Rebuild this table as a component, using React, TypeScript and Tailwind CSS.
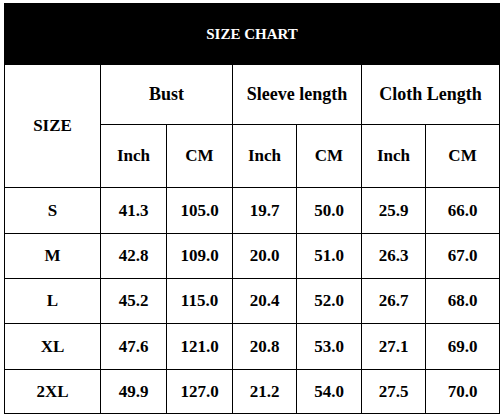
const COLS = [96, 66, 66, 64, 65, 64, 74];

const ROWS = [
  ["S", "41.3", "105.0", "19.7", "50.0", "25.9", "66.0"],
  ["M", "42.8", "109.0", "20.0", "51.0", "26.3", "67.0"],
  ["L", "45.2", "115.0", "20.4", "52.0", "26.7", "68.0"],
  ["XL", "47.6", "121.0", "20.8", "53.0", "27.1", "69.0"],
  ["2XL", "49.9", "127.0", "21.2", "54.0", "27.5", "70.0"],
];

const ROW_H = ["h-[46px]", "h-[45px]", "h-[45px]", "h-[46px]", "h-[44px]"];

export default function App() {
  return (
    <div
      className="w-[504px] h-[418px] bg-white pt-[3px] pl-[4px]"
      style={{ fontFamily: '"Liberation Serif", "Times New Roman", serif' }}
    >
      <table className="border-collapse table-fixed w-[495px] text-black font-bold">
        <colgroup>
          {COLS.map((w, i) => (
            <col key={i} style={{ width: w }} />
          ))}
        </colgroup>
        <tbody>
          {/* Title */}
          <tr className="h-[61px]">
            <td colSpan={7} className="bg-black text-white text-center text-[15px] border border-black">
              SIZE CHART
            </td>
          </tr>

          {/* Group headers */}
          <tr className="h-[60px]">
            <td rowSpan={2} className="border border-black text-center text-[17px]">
              SIZE
            </td>
            <td colSpan={2} className="border border-black text-center text-[18px]">
              Bust
            </td>
            <td colSpan={2} className="border border-black text-center text-[18px]">
              Sleeve length
            </td>
            <td colSpan={2} className="border border-black text-center text-[18px]">
              Cloth Length
            </td>
          </tr>

          {/* Units */}
          <tr className="h-[63px]">
            {["Inch", "CM", "Inch", "CM", "Inch", "CM"].map((u, i) => (
              <td key={i} className="border border-black text-center text-[17px]">
                {u}
              </td>
            ))}
          </tr>

          {ROWS.map((row, r) => (
            <tr key={row[0]} className={ROW_H[r]}>
              {row.map((cell, i) => (
                <td key={i} className="border border-black text-center text-[17px]">
                  {cell}
                </td>
              ))}
            </tr>
          ))}
        </tbody>
      </table>
    </div>
  );
}
